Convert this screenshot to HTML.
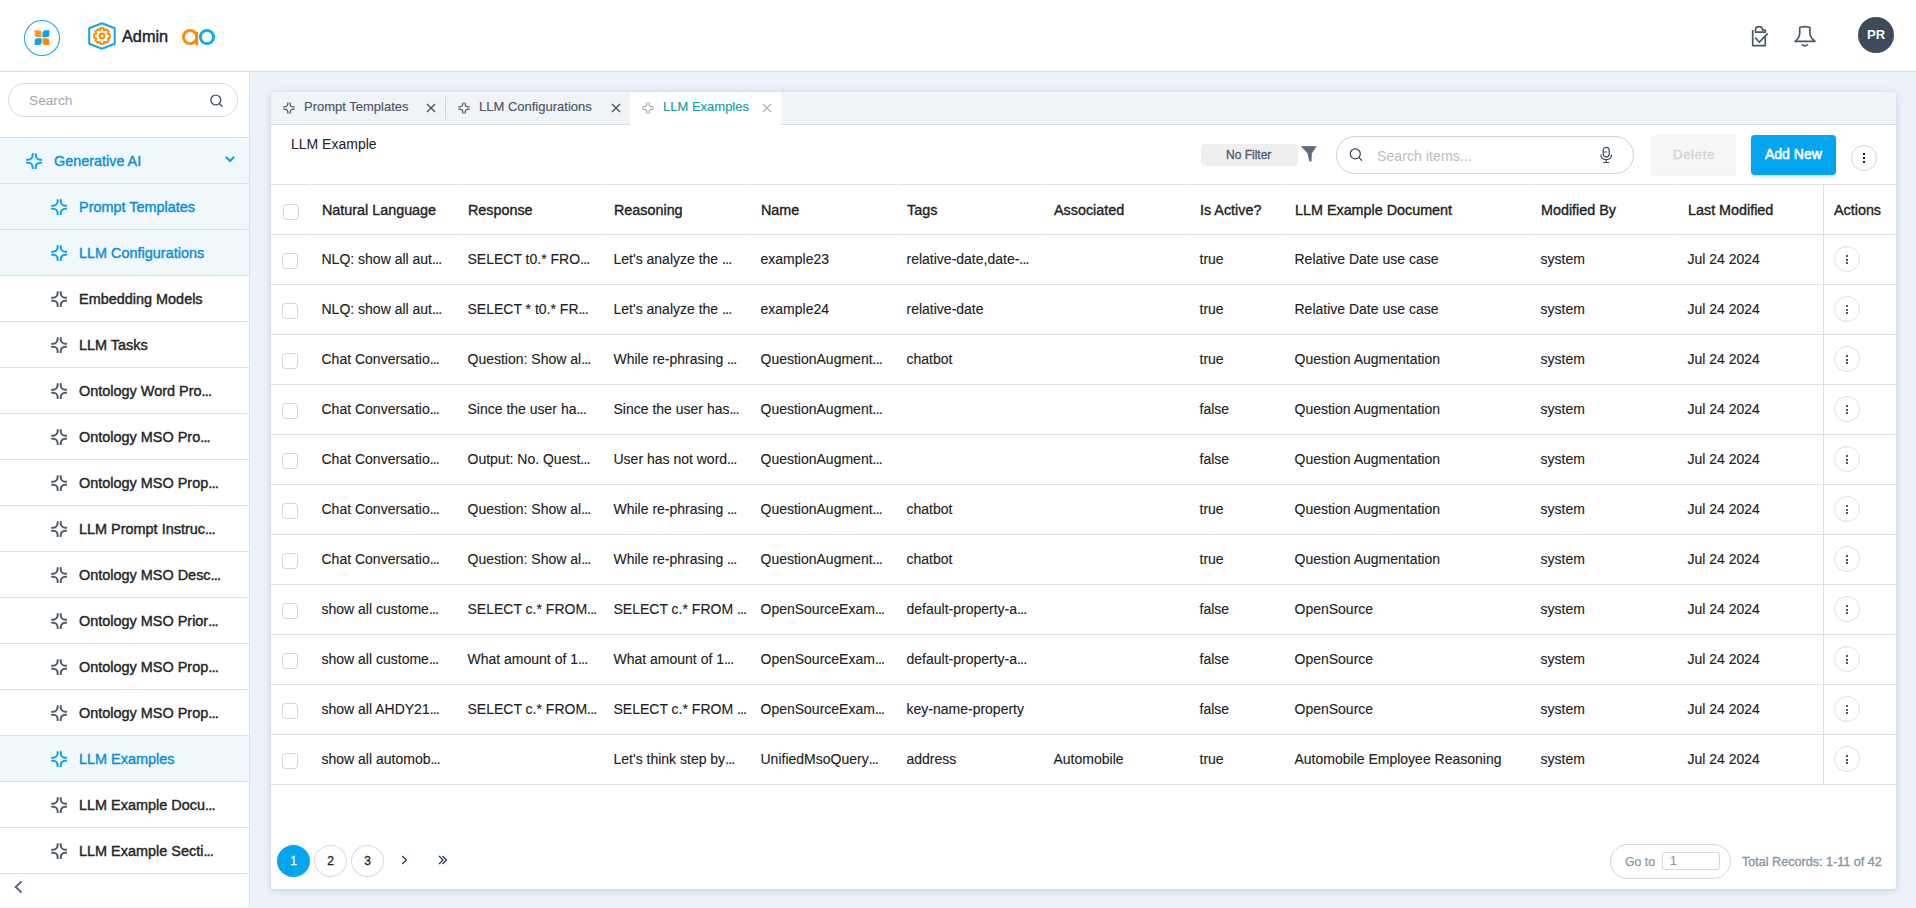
<!DOCTYPE html>
<html><head><meta charset="utf-8"><title>LLM Examples</title>
<style>
*{box-sizing:border-box;margin:0;padding:0}
html,body{width:1916px;height:908px;overflow:hidden}
body{font-family:"Liberation Sans", sans-serif;background:#EDF1F9;color:#212121;position:relative}
.a{position:absolute}
svg{display:block}
.t{position:absolute;line-height:20px;white-space:nowrap}
.ln{position:absolute;height:1px;background:#E0E0E0}
.cb{position:absolute;width:16px;height:16px;border:1px solid #D3D3D3;border-radius:3.5px;background:#fff}
.kb{position:absolute;width:26px;height:26px;border:1px solid #E0E0E0;border-radius:50%;background:#fff}
.kb i{position:absolute;left:11px;width:2px;height:2px;background:#555}
</style></head><body>

<div class="a" style="left:0;top:0;width:1916px;height:71px;background:#fff"></div>
<div class="ln" style="left:0;top:71px;width:1916px;background:#DCDCDC"></div>
<svg class="a" style="left:0;top:0" width="230" height="71" viewBox="0 0 230 71">
 <circle cx="42" cy="38" r="17.5" fill="#fff" stroke="#1AA8EC" stroke-width="1.1"/>
 <path d="M34.6 30.2 H38.6 Q41.6 30.2 41.6 33.2 V37.3 H37.6 Q34.6 37.3 34.6 34.3 Z" fill="#FF9A22"/>
 <path d="M42.5 33.2 Q42.5 30.2 45.5 30.2 H49.4 V34.3 Q49.4 37.3 46.4 37.3 H42.5 Z" fill="#07A5EE"/>
 <path d="M34.6 41.2 Q34.6 38.2 37.6 38.2 H41.6 V42 Q41.6 45 38.6 45 H34.6 Z" fill="#07A5EE"/>
 <path d="M42.5 38.2 H46.4 Q49.4 38.2 49.4 41.2 V45 H45.5 Q42.5 45 42.5 42 Z" fill="#FF8A00"/>
 <path d="M102 23.3 L114.7 28.3 V43.7 L102 48.7 L89.2 43.7 V28.3 Z" fill="none" stroke="#0BA8EA" stroke-width="2" stroke-linejoin="round"/>
 <g transform="translate(102 36)"><path d="M-2.10 -5.94 L-1.75 -7.81 L1.75 -7.81 L2.10 -5.94 L2.71 -5.69 L4.29 -6.76 L6.76 -4.29 L5.69 -2.71 L5.94 -2.10 L7.81 -1.75 L7.81 1.75 L5.94 2.10 L5.69 2.71 L6.76 4.29 L4.29 6.76 L2.71 5.69 L2.10 5.94 L1.75 7.81 L-1.75 7.81 L-2.10 5.94 L-2.71 5.69 L-4.29 6.76 L-6.76 4.29 L-5.69 2.71 L-5.94 2.10 L-7.81 1.75 L-7.81 -1.75 L-5.94 -2.10 L-5.69 -2.71 L-6.76 -4.29 L-4.29 -6.76 L-2.71 -5.69Z" fill="none" stroke="#FF8A00" stroke-width="1.9" stroke-linejoin="round"/><circle r="2.4" fill="none" stroke="#FF8A00" stroke-width="2"/></g>
 <circle cx="190" cy="37" r="6.6" fill="none" stroke="#FF8A00" stroke-width="2.9"/>
 <rect x="195.3" y="32" width="2.9" height="13" fill="#FF8A00"/>
 <circle cx="207" cy="37" r="6.6" fill="none" stroke="#0BAEEC" stroke-width="2.9"/>
</svg>
<div class="t" style="left:122px;top:26px;font-size:16.3px;color:#1C2330;-webkit-text-stroke:0.45px #1C2330;">Admin</div>
<svg class="a" style="left:1745px;top:20px" width="80" height="32" viewBox="0 0 80 32" fill="none" stroke="#4A5868" stroke-width="1.7">
 <path d="M7.7 10 V25.7 H20.3 V16.5"/>
 <path d="M10.5 12.2 V10 Q10.5 6.6 14 6.6 Q17.5 6.6 17.5 10 H20.3 V12.2 Z" stroke-linejoin="round"/>
 <path d="M10.2 17.5 L14.2 22.3 L22.8 13.4"/>
 <path d="M54.7 7.5 Q59.8 5.8 64.9 7.5 V13 Q64.9 16 67 18.5 L70 21.3 H50 L53 18.5 Q54.7 16 54.7 13 Z" stroke-linejoin="round"/>
 <path d="M56.8 24.3 Q59.8 27.3 62.8 24.3"/>
</svg>
<div class="a" style="left:1858px;top:17px;width:36px;height:36px;border-radius:50%;background:#3F4B5A"></div>
<div class="t" style="left:1858px;top:25px;width:36px;text-align:center;font-size:13px;font-weight:bold;color:#fff">PR</div>

<div class="a" style="left:0;top:72px;width:249px;height:835px;background:#fff"></div>
<div class="a" style="left:249px;top:72px;width:1px;height:835px;background:#E0E0E0"></div>
<div class="a" style="left:8px;top:83px;width:230px;height:34px;border:1px solid #D9D9D9;border-radius:17px;background:#fff"></div>
<div class="t" style="left:29px;top:91px;font-size:13.7px;color:#A4A8AD;">Search</div>
<svg class="a" style="left:209px;top:93px" width="16" height="16" viewBox="0 0 16 16" fill="none" stroke="#4A5868" stroke-width="1.4"><circle cx="6.8" cy="7" r="4.9"/><path d="M10.3 10.5 L13.6 13.8"/></svg>
<div class="a" style="left:0;top:138px;width:249px;height:137px;background:#F0F8FC"></div>
<div class="a" style="left:0;top:736px;width:249px;height:45px;background:#F0F8FC"></div>
<div class="ln" style="left:0;top:137px;width:249px"></div>
<div class="ln" style="left:0;top:183px;width:249px"></div>
<div class="ln" style="left:0;top:229px;width:249px"></div>
<div class="ln" style="left:0;top:275px;width:249px"></div>
<div class="ln" style="left:0;top:321px;width:249px"></div>
<div class="ln" style="left:0;top:367px;width:249px"></div>
<div class="ln" style="left:0;top:413px;width:249px"></div>
<div class="ln" style="left:0;top:459px;width:249px"></div>
<div class="ln" style="left:0;top:505px;width:249px"></div>
<div class="ln" style="left:0;top:551px;width:249px"></div>
<div class="ln" style="left:0;top:597px;width:249px"></div>
<div class="ln" style="left:0;top:643px;width:249px"></div>
<div class="ln" style="left:0;top:689px;width:249px"></div>
<div class="ln" style="left:0;top:735px;width:249px"></div>
<div class="ln" style="left:0;top:781px;width:249px"></div>
<div class="ln" style="left:0;top:827px;width:249px"></div>
<div class="ln" style="left:0;top:873px;width:249px"></div>
<div class="a" style="left:26px;top:153px"><svg width="16.4" height="16.4" viewBox="0 0 16 16" fill="none" stroke="#0AA3EC" stroke-width="1.95" stroke-linecap="round"><path d="M6.5 1V2.2A4.3 4.3 0 0 1 2.2 6.5H1M9.5 1V2.2A4.3 4.3 0 0 0 13.8 6.5H15M1 9.5H2.2A4.3 4.3 0 0 1 6.5 13.8V15M15 9.5H13.8A4.3 4.3 0 0 0 9.5 13.8V15"/></svg></div>
<div class="t" style="left:54px;top:151px;font-size:14.4px;color:#0C90D2;-webkit-text-stroke:0.4px #0C90D2;">Generative AI</div>
<svg class="a" style="left:224px;top:155px" width="12" height="9" viewBox="0 0 12 9" fill="none" stroke="#0AA3EC" stroke-width="2"><path d="M1.8 1.8 L6 6 L10.2 1.8"/></svg>
<div class="a" style="left:51px;top:199px"><svg width="16.4" height="16.4" viewBox="0 0 16 16" fill="none" stroke="#0AA3EC" stroke-width="1.95" stroke-linecap="round"><path d="M6.5 1V2.2A4.3 4.3 0 0 1 2.2 6.5H1M9.5 1V2.2A4.3 4.3 0 0 0 13.8 6.5H15M1 9.5H2.2A4.3 4.3 0 0 1 6.5 13.8V15M15 9.5H13.8A4.3 4.3 0 0 0 9.5 13.8V15"/></svg></div>
<div class="t" style="left:79px;top:197px;font-size:14.45px;color:#0C90D2;-webkit-text-stroke:0.42px #0C90D2;">Prompt Templates</div>
<div class="a" style="left:51px;top:245px"><svg width="16.4" height="16.4" viewBox="0 0 16 16" fill="none" stroke="#0AA3EC" stroke-width="1.95" stroke-linecap="round"><path d="M6.5 1V2.2A4.3 4.3 0 0 1 2.2 6.5H1M9.5 1V2.2A4.3 4.3 0 0 0 13.8 6.5H15M1 9.5H2.2A4.3 4.3 0 0 1 6.5 13.8V15M15 9.5H13.8A4.3 4.3 0 0 0 9.5 13.8V15"/></svg></div>
<div class="t" style="left:79px;top:243px;font-size:14.45px;color:#0C90D2;-webkit-text-stroke:0.42px #0C90D2;">LLM Configurations</div>
<div class="a" style="left:51px;top:291px"><svg width="16.4" height="16.4" viewBox="0 0 16 16" fill="none" stroke="#4E5C6C" stroke-width="1.95" stroke-linecap="round"><path d="M6.5 1V2.2A4.3 4.3 0 0 1 2.2 6.5H1M9.5 1V2.2A4.3 4.3 0 0 0 13.8 6.5H15M1 9.5H2.2A4.3 4.3 0 0 1 6.5 13.8V15M15 9.5H13.8A4.3 4.3 0 0 0 9.5 13.8V15"/></svg></div>
<div class="t" style="left:79px;top:289px;font-size:14.45px;color:#262626;-webkit-text-stroke:0.42px #262626;">Embedding Models</div>
<div class="a" style="left:51px;top:337px"><svg width="16.4" height="16.4" viewBox="0 0 16 16" fill="none" stroke="#4E5C6C" stroke-width="1.95" stroke-linecap="round"><path d="M6.5 1V2.2A4.3 4.3 0 0 1 2.2 6.5H1M9.5 1V2.2A4.3 4.3 0 0 0 13.8 6.5H15M1 9.5H2.2A4.3 4.3 0 0 1 6.5 13.8V15M15 9.5H13.8A4.3 4.3 0 0 0 9.5 13.8V15"/></svg></div>
<div class="t" style="left:79px;top:335px;font-size:14.45px;color:#262626;-webkit-text-stroke:0.42px #262626;">LLM Tasks</div>
<div class="a" style="left:51px;top:383px"><svg width="16.4" height="16.4" viewBox="0 0 16 16" fill="none" stroke="#4E5C6C" stroke-width="1.95" stroke-linecap="round"><path d="M6.5 1V2.2A4.3 4.3 0 0 1 2.2 6.5H1M9.5 1V2.2A4.3 4.3 0 0 0 13.8 6.5H15M1 9.5H2.2A4.3 4.3 0 0 1 6.5 13.8V15M15 9.5H13.8A4.3 4.3 0 0 0 9.5 13.8V15"/></svg></div>
<div class="t" style="left:79px;top:381px;font-size:14.45px;color:#262626;-webkit-text-stroke:0.42px #262626;">Ontology Word Pro<span style="letter-spacing:-0.8px">...</span></div>
<div class="a" style="left:51px;top:429px"><svg width="16.4" height="16.4" viewBox="0 0 16 16" fill="none" stroke="#4E5C6C" stroke-width="1.95" stroke-linecap="round"><path d="M6.5 1V2.2A4.3 4.3 0 0 1 2.2 6.5H1M9.5 1V2.2A4.3 4.3 0 0 0 13.8 6.5H15M1 9.5H2.2A4.3 4.3 0 0 1 6.5 13.8V15M15 9.5H13.8A4.3 4.3 0 0 0 9.5 13.8V15"/></svg></div>
<div class="t" style="left:79px;top:427px;font-size:14.45px;color:#262626;-webkit-text-stroke:0.42px #262626;">Ontology MSO Pro<span style="letter-spacing:-0.8px">...</span></div>
<div class="a" style="left:51px;top:475px"><svg width="16.4" height="16.4" viewBox="0 0 16 16" fill="none" stroke="#4E5C6C" stroke-width="1.95" stroke-linecap="round"><path d="M6.5 1V2.2A4.3 4.3 0 0 1 2.2 6.5H1M9.5 1V2.2A4.3 4.3 0 0 0 13.8 6.5H15M1 9.5H2.2A4.3 4.3 0 0 1 6.5 13.8V15M15 9.5H13.8A4.3 4.3 0 0 0 9.5 13.8V15"/></svg></div>
<div class="t" style="left:79px;top:473px;font-size:14.45px;color:#262626;-webkit-text-stroke:0.42px #262626;">Ontology MSO Prop<span style="letter-spacing:-0.8px">...</span></div>
<div class="a" style="left:51px;top:521px"><svg width="16.4" height="16.4" viewBox="0 0 16 16" fill="none" stroke="#4E5C6C" stroke-width="1.95" stroke-linecap="round"><path d="M6.5 1V2.2A4.3 4.3 0 0 1 2.2 6.5H1M9.5 1V2.2A4.3 4.3 0 0 0 13.8 6.5H15M1 9.5H2.2A4.3 4.3 0 0 1 6.5 13.8V15M15 9.5H13.8A4.3 4.3 0 0 0 9.5 13.8V15"/></svg></div>
<div class="t" style="left:79px;top:519px;font-size:14.45px;color:#262626;-webkit-text-stroke:0.42px #262626;">LLM Prompt Instruc<span style="letter-spacing:-0.8px">...</span></div>
<div class="a" style="left:51px;top:567px"><svg width="16.4" height="16.4" viewBox="0 0 16 16" fill="none" stroke="#4E5C6C" stroke-width="1.95" stroke-linecap="round"><path d="M6.5 1V2.2A4.3 4.3 0 0 1 2.2 6.5H1M9.5 1V2.2A4.3 4.3 0 0 0 13.8 6.5H15M1 9.5H2.2A4.3 4.3 0 0 1 6.5 13.8V15M15 9.5H13.8A4.3 4.3 0 0 0 9.5 13.8V15"/></svg></div>
<div class="t" style="left:79px;top:565px;font-size:14.45px;color:#262626;-webkit-text-stroke:0.42px #262626;">Ontology MSO Desc<span style="letter-spacing:-0.8px">...</span></div>
<div class="a" style="left:51px;top:613px"><svg width="16.4" height="16.4" viewBox="0 0 16 16" fill="none" stroke="#4E5C6C" stroke-width="1.95" stroke-linecap="round"><path d="M6.5 1V2.2A4.3 4.3 0 0 1 2.2 6.5H1M9.5 1V2.2A4.3 4.3 0 0 0 13.8 6.5H15M1 9.5H2.2A4.3 4.3 0 0 1 6.5 13.8V15M15 9.5H13.8A4.3 4.3 0 0 0 9.5 13.8V15"/></svg></div>
<div class="t" style="left:79px;top:611px;font-size:14.45px;color:#262626;-webkit-text-stroke:0.42px #262626;">Ontology MSO Prior<span style="letter-spacing:-0.8px">...</span></div>
<div class="a" style="left:51px;top:659px"><svg width="16.4" height="16.4" viewBox="0 0 16 16" fill="none" stroke="#4E5C6C" stroke-width="1.95" stroke-linecap="round"><path d="M6.5 1V2.2A4.3 4.3 0 0 1 2.2 6.5H1M9.5 1V2.2A4.3 4.3 0 0 0 13.8 6.5H15M1 9.5H2.2A4.3 4.3 0 0 1 6.5 13.8V15M15 9.5H13.8A4.3 4.3 0 0 0 9.5 13.8V15"/></svg></div>
<div class="t" style="left:79px;top:657px;font-size:14.45px;color:#262626;-webkit-text-stroke:0.42px #262626;">Ontology MSO Prop<span style="letter-spacing:-0.8px">...</span></div>
<div class="a" style="left:51px;top:705px"><svg width="16.4" height="16.4" viewBox="0 0 16 16" fill="none" stroke="#4E5C6C" stroke-width="1.95" stroke-linecap="round"><path d="M6.5 1V2.2A4.3 4.3 0 0 1 2.2 6.5H1M9.5 1V2.2A4.3 4.3 0 0 0 13.8 6.5H15M1 9.5H2.2A4.3 4.3 0 0 1 6.5 13.8V15M15 9.5H13.8A4.3 4.3 0 0 0 9.5 13.8V15"/></svg></div>
<div class="t" style="left:79px;top:703px;font-size:14.45px;color:#262626;-webkit-text-stroke:0.42px #262626;">Ontology MSO Prop<span style="letter-spacing:-0.8px">...</span></div>
<div class="a" style="left:51px;top:751px"><svg width="16.4" height="16.4" viewBox="0 0 16 16" fill="none" stroke="#0AA3EC" stroke-width="1.95" stroke-linecap="round"><path d="M6.5 1V2.2A4.3 4.3 0 0 1 2.2 6.5H1M9.5 1V2.2A4.3 4.3 0 0 0 13.8 6.5H15M1 9.5H2.2A4.3 4.3 0 0 1 6.5 13.8V15M15 9.5H13.8A4.3 4.3 0 0 0 9.5 13.8V15"/></svg></div>
<div class="t" style="left:79px;top:749px;font-size:14.45px;color:#0C90D2;-webkit-text-stroke:0.42px #0C90D2;">LLM Examples</div>
<div class="a" style="left:51px;top:797px"><svg width="16.4" height="16.4" viewBox="0 0 16 16" fill="none" stroke="#4E5C6C" stroke-width="1.95" stroke-linecap="round"><path d="M6.5 1V2.2A4.3 4.3 0 0 1 2.2 6.5H1M9.5 1V2.2A4.3 4.3 0 0 0 13.8 6.5H15M1 9.5H2.2A4.3 4.3 0 0 1 6.5 13.8V15M15 9.5H13.8A4.3 4.3 0 0 0 9.5 13.8V15"/></svg></div>
<div class="t" style="left:79px;top:795px;font-size:14.45px;color:#262626;-webkit-text-stroke:0.42px #262626;">LLM Example Docu<span style="letter-spacing:-0.8px">...</span></div>
<div class="a" style="left:51px;top:843px"><svg width="16.4" height="16.4" viewBox="0 0 16 16" fill="none" stroke="#4E5C6C" stroke-width="1.95" stroke-linecap="round"><path d="M6.5 1V2.2A4.3 4.3 0 0 1 2.2 6.5H1M9.5 1V2.2A4.3 4.3 0 0 0 13.8 6.5H15M1 9.5H2.2A4.3 4.3 0 0 1 6.5 13.8V15M15 9.5H13.8A4.3 4.3 0 0 0 9.5 13.8V15"/></svg></div>
<div class="t" style="left:79px;top:841px;font-size:14.45px;color:#262626;-webkit-text-stroke:0.42px #262626;">LLM Example Secti<span style="letter-spacing:-0.8px">...</span></div>
<svg class="a" style="left:13px;top:880px" width="11" height="14" viewBox="0 0 11 14" fill="none" stroke="#556575" stroke-width="1.8"><path d="M8.5 1.5 L2.6 7 L8.5 12.5"/></svg>
<div class="a" style="left:271px;top:92px;width:1625px;height:797px;background:#fff;border-radius:3px;box-shadow:0 0 1px rgba(40,50,70,0.18),0 2px 6px rgba(50,60,90,0.12),0 0 12px rgba(50,60,90,0.06)"></div>
<div class="a" style="left:271px;top:92px;width:1625px;height:32px;background:#F1F4F7;border-radius:4px 4px 0 0"></div>
<div class="ln" style="left:271px;top:124px;width:1625px;background:#D9D9D9"></div>
<div class="a" style="left:630px;top:92px;width:151px;height:33px;background:#fff"></div>
<div class="a" style="left:445px;top:97px;width:1px;height:22px;background:#CFD3D8"></div>
<div class="a" style="left:283px;top:102px"><svg width="12" height="12" viewBox="0 0 16 16" fill="none" stroke="#505A68" stroke-width="1.65" stroke-linecap="round"><path d="M6.5 1V2.2A4.3 4.3 0 0 1 2.2 6.5H1M9.5 1V2.2A4.3 4.3 0 0 0 13.8 6.5H15M1 9.5H2.2A4.3 4.3 0 0 1 6.5 13.8V15M15 9.5H13.8A4.3 4.3 0 0 0 9.5 13.8V15"/></svg></div>
<div class="t" style="left:304px;top:97px;font-size:13px;color:#4A5463;-webkit-text-stroke:0.15px #4A5463;">Prompt Templates</div>
<svg class="a" style="left:426px;top:103px" width="10" height="10" viewBox="0 0 10 10" stroke="#4A5463" stroke-width="1.4"><path d="M1 1L9 9M9 1L1 9"/></svg>
<div class="a" style="left:458px;top:102px"><svg width="12" height="12" viewBox="0 0 16 16" fill="none" stroke="#505A68" stroke-width="1.65" stroke-linecap="round"><path d="M6.5 1V2.2A4.3 4.3 0 0 1 2.2 6.5H1M9.5 1V2.2A4.3 4.3 0 0 0 13.8 6.5H15M1 9.5H2.2A4.3 4.3 0 0 1 6.5 13.8V15M15 9.5H13.8A4.3 4.3 0 0 0 9.5 13.8V15"/></svg></div>
<div class="t" style="left:479px;top:97px;font-size:13px;color:#4A5463;-webkit-text-stroke:0.15px #4A5463;">LLM Configurations</div>
<svg class="a" style="left:611px;top:103px" width="10" height="10" viewBox="0 0 10 10" stroke="#4A5463" stroke-width="1.4"><path d="M1 1L9 9M9 1L1 9"/></svg>
<div class="a" style="left:642px;top:102px"><svg width="12" height="12" viewBox="0 0 16 16" fill="none" stroke="#ABABAB" stroke-width="1.65" stroke-linecap="round"><path d="M6.5 1V2.2A4.3 4.3 0 0 1 2.2 6.5H1M9.5 1V2.2A4.3 4.3 0 0 0 13.8 6.5H15M1 9.5H2.2A4.3 4.3 0 0 1 6.5 13.8V15M15 9.5H13.8A4.3 4.3 0 0 0 9.5 13.8V15"/></svg></div>
<div class="t" style="left:663px;top:97px;font-size:13px;color:#0FA2A0;-webkit-text-stroke:0.15px #0FA2A0;">LLM Examples</div>
<svg class="a" style="left:762px;top:103px" width="10" height="10" viewBox="0 0 10 10" stroke="#B5B5B5" stroke-width="1.4"><path d="M1 1L9 9M9 1L1 9"/></svg>
<div class="t" style="left:291px;top:134px;font-size:14px;color:#212121;">LLM Example</div>
<div class="a" style="left:1201px;top:144px;width:97px;height:22px;background:#EFEFEF;border-radius:4px"></div>
<div class="t" style="left:1226px;top:145px;font-size:12px;color:#4A5A6A;-webkit-text-stroke:0.3px #4A5A6A;">No Filter</div>
<svg class="a" style="left:1301px;top:146px" width="16" height="16" viewBox="0 0 16 16"><path d="M0.2 0.3 H15.4 L10.6 7.4 L10.2 15.6 L8.4 14.8 L6.8 7.4 Z" fill="#5A6B7D" stroke="#5A6B7D" stroke-width="0.5" stroke-linejoin="round"/></svg>
<div class="a" style="left:1336px;top:136px;width:298px;height:38px;border:1px solid #D0D0D0;border-radius:19px;background:#fff"></div>
<svg class="a" style="left:1348px;top:147px" width="16" height="16" viewBox="0 0 16 16" fill="none" stroke="#3F4B5A" stroke-width="1.3"><circle cx="7.3" cy="6.8" r="5"/><path d="M10.8 10.4 L14 13.6"/></svg>
<div class="t" style="left:1377px;top:146px;font-size:14.2px;color:#BDBDBD;">Search items...</div>
<svg class="a" style="left:1598px;top:145px" width="16" height="19" viewBox="0 0 16 19" fill="none" stroke="#3F4B5A" stroke-width="1.2"><rect x="5.2" y="2.3" width="6" height="9.6" rx="3"/><path d="M2.9 9.5 Q2.9 14.6 8.2 14.6 Q13.5 14.6 13.5 9.5M8.2 14.6 V17.5M5.2 17.5 H11.2M5.5 7 H9"/></svg>
<div class="a" style="left:1651px;top:135px;width:85px;height:40px;background:#F6F6F6;border-radius:4px;box-shadow:0 1px 2px rgba(0,0,0,0.07)"></div>
<div class="t" style="left:1673px;top:145px;font-size:13px;color:#D2D2D2;letter-spacing:0.75px;-webkit-text-stroke:0.3px #D2D2D2;">Delete</div>
<div class="a" style="left:1751px;top:135px;width:85px;height:40px;background:#03A6EE;border-radius:4px;box-shadow:0 2px 3px rgba(0,0,0,0.14)"></div>
<div class="t" style="left:1765px;top:144px;font-size:14px;color:#fff;-webkit-text-stroke:0.55px #fff;">Add New</div>
<div class="a" style="left:1851px;top:145px;width:26px;height:26px;border:1px solid #D6D6D6;border-radius:50%;background:#fff"></div>
<div class="a" style="left:1863px;top:153px;width:2px;height:2px;background:#1C2330"></div>
<div class="a" style="left:1863px;top:157px;width:2px;height:2px;background:#1C2330"></div>
<div class="a" style="left:1863px;top:161px;width:2px;height:2px;background:#1C2330"></div>
<div class="ln" style="left:271px;top:184px;width:1625px"></div>
<div class="ln" style="left:271px;top:234px;width:1625px"></div>
<div class="ln" style="left:271px;top:284px;width:1625px"></div>
<div class="ln" style="left:271px;top:334px;width:1625px"></div>
<div class="ln" style="left:271px;top:384px;width:1625px"></div>
<div class="ln" style="left:271px;top:434px;width:1625px"></div>
<div class="ln" style="left:271px;top:484px;width:1625px"></div>
<div class="ln" style="left:271px;top:534px;width:1625px"></div>
<div class="ln" style="left:271px;top:584px;width:1625px"></div>
<div class="ln" style="left:271px;top:634px;width:1625px"></div>
<div class="ln" style="left:271px;top:684px;width:1625px"></div>
<div class="ln" style="left:271px;top:734px;width:1625px"></div>
<div class="ln" style="left:271px;top:784px;width:1625px"></div>
<div class="a" style="left:311px;top:184px;width:1px;height:1px;background:#fff"></div>
<div class="a" style="left:311px;top:234px;width:1px;height:1px;background:#fff"></div>
<div class="a" style="left:457px;top:184px;width:1px;height:1px;background:#fff"></div>
<div class="a" style="left:457px;top:234px;width:1px;height:1px;background:#fff"></div>
<div class="a" style="left:603px;top:184px;width:1px;height:1px;background:#fff"></div>
<div class="a" style="left:603px;top:234px;width:1px;height:1px;background:#fff"></div>
<div class="a" style="left:750px;top:184px;width:1px;height:1px;background:#fff"></div>
<div class="a" style="left:750px;top:234px;width:1px;height:1px;background:#fff"></div>
<div class="a" style="left:896px;top:184px;width:1px;height:1px;background:#fff"></div>
<div class="a" style="left:896px;top:234px;width:1px;height:1px;background:#fff"></div>
<div class="a" style="left:1043px;top:184px;width:1px;height:1px;background:#fff"></div>
<div class="a" style="left:1043px;top:234px;width:1px;height:1px;background:#fff"></div>
<div class="a" style="left:1189px;top:184px;width:1px;height:1px;background:#fff"></div>
<div class="a" style="left:1189px;top:234px;width:1px;height:1px;background:#fff"></div>
<div class="a" style="left:1284px;top:184px;width:1px;height:1px;background:#fff"></div>
<div class="a" style="left:1284px;top:234px;width:1px;height:1px;background:#fff"></div>
<div class="a" style="left:1530px;top:184px;width:1px;height:1px;background:#fff"></div>
<div class="a" style="left:1530px;top:234px;width:1px;height:1px;background:#fff"></div>
<div class="a" style="left:1677px;top:184px;width:1px;height:1px;background:#fff"></div>
<div class="a" style="left:1677px;top:234px;width:1px;height:1px;background:#fff"></div>
<div class="a" style="left:1823px;top:184px;width:1px;height:601px;background:#E0E0E0"></div>
<div class="cb" style="left:283px;top:204px"></div>
<div class="t" style="left:322px;top:200px;font-size:14.35px;color:#212121;-webkit-text-stroke:0.35px #212121;">Natural Language</div>
<div class="t" style="left:468px;top:200px;font-size:14.35px;color:#212121;-webkit-text-stroke:0.35px #212121;">Response</div>
<div class="t" style="left:614px;top:200px;font-size:14.35px;color:#212121;-webkit-text-stroke:0.35px #212121;">Reasoning</div>
<div class="t" style="left:761px;top:200px;font-size:14.35px;color:#212121;-webkit-text-stroke:0.35px #212121;">Name</div>
<div class="t" style="left:907px;top:200px;font-size:14.35px;color:#212121;-webkit-text-stroke:0.35px #212121;">Tags</div>
<div class="t" style="left:1054px;top:200px;font-size:14.35px;color:#212121;-webkit-text-stroke:0.35px #212121;">Associated</div>
<div class="t" style="left:1200px;top:200px;font-size:14.35px;color:#212121;-webkit-text-stroke:0.35px #212121;">Is Active?</div>
<div class="t" style="left:1295px;top:200px;font-size:14.35px;color:#212121;-webkit-text-stroke:0.35px #212121;">LLM Example Document</div>
<div class="t" style="left:1541px;top:200px;font-size:14.35px;color:#212121;-webkit-text-stroke:0.35px #212121;">Modified By</div>
<div class="t" style="left:1688px;top:200px;font-size:14.35px;color:#212121;-webkit-text-stroke:0.35px #212121;">Last Modified</div>
<div class="t" style="left:1834px;top:200px;font-size:14.35px;color:#212121;-webkit-text-stroke:0.35px #212121;">Actions</div>
<div class="cb" style="left:282px;top:253px"></div>
<div class="t" style="left:321.5px;top:249px;font-size:14px;color:#212121;-webkit-text-stroke:0.12px #212121;">NLQ: show all aut<span style="letter-spacing:-0.8px">...</span></div>
<div class="t" style="left:467.5px;top:249px;font-size:14px;color:#212121;-webkit-text-stroke:0.12px #212121;">SELECT t0.* FRO<span style="letter-spacing:-0.8px">...</span></div>
<div class="t" style="left:613.5px;top:249px;font-size:14px;color:#212121;-webkit-text-stroke:0.12px #212121;">Let's analyze the <span style="letter-spacing:-0.8px">...</span></div>
<div class="t" style="left:760.5px;top:249px;font-size:14px;color:#212121;-webkit-text-stroke:0.12px #212121;">example23</div>
<div class="t" style="left:906.5px;top:249px;font-size:14px;color:#212121;-webkit-text-stroke:0.12px #212121;">relative-date,date-<span style="letter-spacing:-0.8px">...</span></div>
<div class="t" style="left:1199.5px;top:249px;font-size:14px;color:#212121;-webkit-text-stroke:0.12px #212121;">true</div>
<div class="t" style="left:1294.5px;top:249px;font-size:14px;color:#212121;-webkit-text-stroke:0.12px #212121;">Relative Date use case</div>
<div class="t" style="left:1540.5px;top:249px;font-size:14px;color:#212121;-webkit-text-stroke:0.12px #212121;">system</div>
<div class="t" style="left:1687.5px;top:249px;font-size:14px;color:#212121;-webkit-text-stroke:0.12px #212121;">Jul 24 2024</div>
<div class="kb" style="left:1834px;top:246px"><i style="top:8px"></i><i style="top:11.5px"></i><i style="top:15px"></i></div>
<div class="cb" style="left:282px;top:303px"></div>
<div class="t" style="left:321.5px;top:299px;font-size:14px;color:#212121;-webkit-text-stroke:0.12px #212121;">NLQ: show all aut<span style="letter-spacing:-0.8px">...</span></div>
<div class="t" style="left:467.5px;top:299px;font-size:14px;color:#212121;-webkit-text-stroke:0.12px #212121;">SELECT * t0.* FR<span style="letter-spacing:-0.8px">...</span></div>
<div class="t" style="left:613.5px;top:299px;font-size:14px;color:#212121;-webkit-text-stroke:0.12px #212121;">Let's analyze the <span style="letter-spacing:-0.8px">...</span></div>
<div class="t" style="left:760.5px;top:299px;font-size:14px;color:#212121;-webkit-text-stroke:0.12px #212121;">example24</div>
<div class="t" style="left:906.5px;top:299px;font-size:14px;color:#212121;-webkit-text-stroke:0.12px #212121;">relative-date</div>
<div class="t" style="left:1199.5px;top:299px;font-size:14px;color:#212121;-webkit-text-stroke:0.12px #212121;">true</div>
<div class="t" style="left:1294.5px;top:299px;font-size:14px;color:#212121;-webkit-text-stroke:0.12px #212121;">Relative Date use case</div>
<div class="t" style="left:1540.5px;top:299px;font-size:14px;color:#212121;-webkit-text-stroke:0.12px #212121;">system</div>
<div class="t" style="left:1687.5px;top:299px;font-size:14px;color:#212121;-webkit-text-stroke:0.12px #212121;">Jul 24 2024</div>
<div class="kb" style="left:1834px;top:296px"><i style="top:8px"></i><i style="top:11.5px"></i><i style="top:15px"></i></div>
<div class="cb" style="left:282px;top:353px"></div>
<div class="t" style="left:321.5px;top:349px;font-size:14px;color:#212121;-webkit-text-stroke:0.12px #212121;">Chat Conversatio<span style="letter-spacing:-0.8px">...</span></div>
<div class="t" style="left:467.5px;top:349px;font-size:14px;color:#212121;-webkit-text-stroke:0.12px #212121;">Question: Show al<span style="letter-spacing:-0.8px">...</span></div>
<div class="t" style="left:613.5px;top:349px;font-size:14px;color:#212121;-webkit-text-stroke:0.12px #212121;">While re-phrasing <span style="letter-spacing:-0.8px">...</span></div>
<div class="t" style="left:760.5px;top:349px;font-size:14px;color:#212121;-webkit-text-stroke:0.12px #212121;">QuestionAugment<span style="letter-spacing:-0.8px">...</span></div>
<div class="t" style="left:906.5px;top:349px;font-size:14px;color:#212121;-webkit-text-stroke:0.12px #212121;">chatbot</div>
<div class="t" style="left:1199.5px;top:349px;font-size:14px;color:#212121;-webkit-text-stroke:0.12px #212121;">true</div>
<div class="t" style="left:1294.5px;top:349px;font-size:14px;color:#212121;-webkit-text-stroke:0.12px #212121;">Question Augmentation</div>
<div class="t" style="left:1540.5px;top:349px;font-size:14px;color:#212121;-webkit-text-stroke:0.12px #212121;">system</div>
<div class="t" style="left:1687.5px;top:349px;font-size:14px;color:#212121;-webkit-text-stroke:0.12px #212121;">Jul 24 2024</div>
<div class="kb" style="left:1834px;top:346px"><i style="top:8px"></i><i style="top:11.5px"></i><i style="top:15px"></i></div>
<div class="cb" style="left:282px;top:403px"></div>
<div class="t" style="left:321.5px;top:399px;font-size:14px;color:#212121;-webkit-text-stroke:0.12px #212121;">Chat Conversatio<span style="letter-spacing:-0.8px">...</span></div>
<div class="t" style="left:467.5px;top:399px;font-size:14px;color:#212121;-webkit-text-stroke:0.12px #212121;">Since the user ha<span style="letter-spacing:-0.8px">...</span></div>
<div class="t" style="left:613.5px;top:399px;font-size:14px;color:#212121;-webkit-text-stroke:0.12px #212121;">Since the user has<span style="letter-spacing:-0.8px">...</span></div>
<div class="t" style="left:760.5px;top:399px;font-size:14px;color:#212121;-webkit-text-stroke:0.12px #212121;">QuestionAugment<span style="letter-spacing:-0.8px">...</span></div>
<div class="t" style="left:1199.5px;top:399px;font-size:14px;color:#212121;-webkit-text-stroke:0.12px #212121;">false</div>
<div class="t" style="left:1294.5px;top:399px;font-size:14px;color:#212121;-webkit-text-stroke:0.12px #212121;">Question Augmentation</div>
<div class="t" style="left:1540.5px;top:399px;font-size:14px;color:#212121;-webkit-text-stroke:0.12px #212121;">system</div>
<div class="t" style="left:1687.5px;top:399px;font-size:14px;color:#212121;-webkit-text-stroke:0.12px #212121;">Jul 24 2024</div>
<div class="kb" style="left:1834px;top:396px"><i style="top:8px"></i><i style="top:11.5px"></i><i style="top:15px"></i></div>
<div class="cb" style="left:282px;top:453px"></div>
<div class="t" style="left:321.5px;top:449px;font-size:14px;color:#212121;-webkit-text-stroke:0.12px #212121;">Chat Conversatio<span style="letter-spacing:-0.8px">...</span></div>
<div class="t" style="left:467.5px;top:449px;font-size:14px;color:#212121;-webkit-text-stroke:0.12px #212121;">Output: No. Quest<span style="letter-spacing:-0.8px">...</span></div>
<div class="t" style="left:613.5px;top:449px;font-size:14px;color:#212121;-webkit-text-stroke:0.12px #212121;">User has not word<span style="letter-spacing:-0.8px">...</span></div>
<div class="t" style="left:760.5px;top:449px;font-size:14px;color:#212121;-webkit-text-stroke:0.12px #212121;">QuestionAugment<span style="letter-spacing:-0.8px">...</span></div>
<div class="t" style="left:1199.5px;top:449px;font-size:14px;color:#212121;-webkit-text-stroke:0.12px #212121;">false</div>
<div class="t" style="left:1294.5px;top:449px;font-size:14px;color:#212121;-webkit-text-stroke:0.12px #212121;">Question Augmentation</div>
<div class="t" style="left:1540.5px;top:449px;font-size:14px;color:#212121;-webkit-text-stroke:0.12px #212121;">system</div>
<div class="t" style="left:1687.5px;top:449px;font-size:14px;color:#212121;-webkit-text-stroke:0.12px #212121;">Jul 24 2024</div>
<div class="kb" style="left:1834px;top:446px"><i style="top:8px"></i><i style="top:11.5px"></i><i style="top:15px"></i></div>
<div class="cb" style="left:282px;top:503px"></div>
<div class="t" style="left:321.5px;top:499px;font-size:14px;color:#212121;-webkit-text-stroke:0.12px #212121;">Chat Conversatio<span style="letter-spacing:-0.8px">...</span></div>
<div class="t" style="left:467.5px;top:499px;font-size:14px;color:#212121;-webkit-text-stroke:0.12px #212121;">Question: Show al<span style="letter-spacing:-0.8px">...</span></div>
<div class="t" style="left:613.5px;top:499px;font-size:14px;color:#212121;-webkit-text-stroke:0.12px #212121;">While re-phrasing <span style="letter-spacing:-0.8px">...</span></div>
<div class="t" style="left:760.5px;top:499px;font-size:14px;color:#212121;-webkit-text-stroke:0.12px #212121;">QuestionAugment<span style="letter-spacing:-0.8px">...</span></div>
<div class="t" style="left:906.5px;top:499px;font-size:14px;color:#212121;-webkit-text-stroke:0.12px #212121;">chatbot</div>
<div class="t" style="left:1199.5px;top:499px;font-size:14px;color:#212121;-webkit-text-stroke:0.12px #212121;">true</div>
<div class="t" style="left:1294.5px;top:499px;font-size:14px;color:#212121;-webkit-text-stroke:0.12px #212121;">Question Augmentation</div>
<div class="t" style="left:1540.5px;top:499px;font-size:14px;color:#212121;-webkit-text-stroke:0.12px #212121;">system</div>
<div class="t" style="left:1687.5px;top:499px;font-size:14px;color:#212121;-webkit-text-stroke:0.12px #212121;">Jul 24 2024</div>
<div class="kb" style="left:1834px;top:496px"><i style="top:8px"></i><i style="top:11.5px"></i><i style="top:15px"></i></div>
<div class="cb" style="left:282px;top:553px"></div>
<div class="t" style="left:321.5px;top:549px;font-size:14px;color:#212121;-webkit-text-stroke:0.12px #212121;">Chat Conversatio<span style="letter-spacing:-0.8px">...</span></div>
<div class="t" style="left:467.5px;top:549px;font-size:14px;color:#212121;-webkit-text-stroke:0.12px #212121;">Question: Show al<span style="letter-spacing:-0.8px">...</span></div>
<div class="t" style="left:613.5px;top:549px;font-size:14px;color:#212121;-webkit-text-stroke:0.12px #212121;">While re-phrasing <span style="letter-spacing:-0.8px">...</span></div>
<div class="t" style="left:760.5px;top:549px;font-size:14px;color:#212121;-webkit-text-stroke:0.12px #212121;">QuestionAugment<span style="letter-spacing:-0.8px">...</span></div>
<div class="t" style="left:906.5px;top:549px;font-size:14px;color:#212121;-webkit-text-stroke:0.12px #212121;">chatbot</div>
<div class="t" style="left:1199.5px;top:549px;font-size:14px;color:#212121;-webkit-text-stroke:0.12px #212121;">true</div>
<div class="t" style="left:1294.5px;top:549px;font-size:14px;color:#212121;-webkit-text-stroke:0.12px #212121;">Question Augmentation</div>
<div class="t" style="left:1540.5px;top:549px;font-size:14px;color:#212121;-webkit-text-stroke:0.12px #212121;">system</div>
<div class="t" style="left:1687.5px;top:549px;font-size:14px;color:#212121;-webkit-text-stroke:0.12px #212121;">Jul 24 2024</div>
<div class="kb" style="left:1834px;top:546px"><i style="top:8px"></i><i style="top:11.5px"></i><i style="top:15px"></i></div>
<div class="cb" style="left:282px;top:603px"></div>
<div class="t" style="left:321.5px;top:599px;font-size:14px;color:#212121;-webkit-text-stroke:0.12px #212121;">show all custome<span style="letter-spacing:-0.8px">...</span></div>
<div class="t" style="left:467.5px;top:599px;font-size:14px;color:#212121;-webkit-text-stroke:0.12px #212121;">SELECT c.* FROM<span style="letter-spacing:-0.8px">...</span></div>
<div class="t" style="left:613.5px;top:599px;font-size:14px;color:#212121;-webkit-text-stroke:0.12px #212121;">SELECT c.* FROM <span style="letter-spacing:-0.8px">...</span></div>
<div class="t" style="left:760.5px;top:599px;font-size:14px;color:#212121;-webkit-text-stroke:0.12px #212121;">OpenSourceExam<span style="letter-spacing:-0.8px">...</span></div>
<div class="t" style="left:906.5px;top:599px;font-size:14px;color:#212121;-webkit-text-stroke:0.12px #212121;">default-property-a<span style="letter-spacing:-0.8px">...</span></div>
<div class="t" style="left:1199.5px;top:599px;font-size:14px;color:#212121;-webkit-text-stroke:0.12px #212121;">false</div>
<div class="t" style="left:1294.5px;top:599px;font-size:14px;color:#212121;-webkit-text-stroke:0.12px #212121;">OpenSource</div>
<div class="t" style="left:1540.5px;top:599px;font-size:14px;color:#212121;-webkit-text-stroke:0.12px #212121;">system</div>
<div class="t" style="left:1687.5px;top:599px;font-size:14px;color:#212121;-webkit-text-stroke:0.12px #212121;">Jul 24 2024</div>
<div class="kb" style="left:1834px;top:596px"><i style="top:8px"></i><i style="top:11.5px"></i><i style="top:15px"></i></div>
<div class="cb" style="left:282px;top:653px"></div>
<div class="t" style="left:321.5px;top:649px;font-size:14px;color:#212121;-webkit-text-stroke:0.12px #212121;">show all custome<span style="letter-spacing:-0.8px">...</span></div>
<div class="t" style="left:467.5px;top:649px;font-size:14px;color:#212121;-webkit-text-stroke:0.12px #212121;">What amount of 1<span style="letter-spacing:-0.8px">...</span></div>
<div class="t" style="left:613.5px;top:649px;font-size:14px;color:#212121;-webkit-text-stroke:0.12px #212121;">What amount of 1<span style="letter-spacing:-0.8px">...</span></div>
<div class="t" style="left:760.5px;top:649px;font-size:14px;color:#212121;-webkit-text-stroke:0.12px #212121;">OpenSourceExam<span style="letter-spacing:-0.8px">...</span></div>
<div class="t" style="left:906.5px;top:649px;font-size:14px;color:#212121;-webkit-text-stroke:0.12px #212121;">default-property-a<span style="letter-spacing:-0.8px">...</span></div>
<div class="t" style="left:1199.5px;top:649px;font-size:14px;color:#212121;-webkit-text-stroke:0.12px #212121;">false</div>
<div class="t" style="left:1294.5px;top:649px;font-size:14px;color:#212121;-webkit-text-stroke:0.12px #212121;">OpenSource</div>
<div class="t" style="left:1540.5px;top:649px;font-size:14px;color:#212121;-webkit-text-stroke:0.12px #212121;">system</div>
<div class="t" style="left:1687.5px;top:649px;font-size:14px;color:#212121;-webkit-text-stroke:0.12px #212121;">Jul 24 2024</div>
<div class="kb" style="left:1834px;top:646px"><i style="top:8px"></i><i style="top:11.5px"></i><i style="top:15px"></i></div>
<div class="cb" style="left:282px;top:703px"></div>
<div class="t" style="left:321.5px;top:699px;font-size:14px;color:#212121;-webkit-text-stroke:0.12px #212121;">show all AHDY21<span style="letter-spacing:-0.8px">...</span></div>
<div class="t" style="left:467.5px;top:699px;font-size:14px;color:#212121;-webkit-text-stroke:0.12px #212121;">SELECT c.* FROM<span style="letter-spacing:-0.8px">...</span></div>
<div class="t" style="left:613.5px;top:699px;font-size:14px;color:#212121;-webkit-text-stroke:0.12px #212121;">SELECT c.* FROM <span style="letter-spacing:-0.8px">...</span></div>
<div class="t" style="left:760.5px;top:699px;font-size:14px;color:#212121;-webkit-text-stroke:0.12px #212121;">OpenSourceExam<span style="letter-spacing:-0.8px">...</span></div>
<div class="t" style="left:906.5px;top:699px;font-size:14px;color:#212121;-webkit-text-stroke:0.12px #212121;">key-name-property</div>
<div class="t" style="left:1199.5px;top:699px;font-size:14px;color:#212121;-webkit-text-stroke:0.12px #212121;">false</div>
<div class="t" style="left:1294.5px;top:699px;font-size:14px;color:#212121;-webkit-text-stroke:0.12px #212121;">OpenSource</div>
<div class="t" style="left:1540.5px;top:699px;font-size:14px;color:#212121;-webkit-text-stroke:0.12px #212121;">system</div>
<div class="t" style="left:1687.5px;top:699px;font-size:14px;color:#212121;-webkit-text-stroke:0.12px #212121;">Jul 24 2024</div>
<div class="kb" style="left:1834px;top:696px"><i style="top:8px"></i><i style="top:11.5px"></i><i style="top:15px"></i></div>
<div class="cb" style="left:282px;top:753px"></div>
<div class="t" style="left:321.5px;top:749px;font-size:14px;color:#212121;-webkit-text-stroke:0.12px #212121;">show all automob<span style="letter-spacing:-0.8px">...</span></div>
<div class="t" style="left:613.5px;top:749px;font-size:14px;color:#212121;-webkit-text-stroke:0.12px #212121;">Let's think step by<span style="letter-spacing:-0.8px">...</span></div>
<div class="t" style="left:760.5px;top:749px;font-size:14px;color:#212121;-webkit-text-stroke:0.12px #212121;">UnifiedMsoQuery<span style="letter-spacing:-0.8px">...</span></div>
<div class="t" style="left:906.5px;top:749px;font-size:14px;color:#212121;-webkit-text-stroke:0.12px #212121;">address</div>
<div class="t" style="left:1053.5px;top:749px;font-size:14px;color:#212121;-webkit-text-stroke:0.12px #212121;">Automobile</div>
<div class="t" style="left:1199.5px;top:749px;font-size:14px;color:#212121;-webkit-text-stroke:0.12px #212121;">true</div>
<div class="t" style="left:1294.5px;top:749px;font-size:14px;color:#212121;-webkit-text-stroke:0.12px #212121;">Automobile Employee Reasoning</div>
<div class="t" style="left:1540.5px;top:749px;font-size:14px;color:#212121;-webkit-text-stroke:0.12px #212121;">system</div>
<div class="t" style="left:1687.5px;top:749px;font-size:14px;color:#212121;-webkit-text-stroke:0.12px #212121;">Jul 24 2024</div>
<div class="kb" style="left:1834px;top:746px"><i style="top:8px"></i><i style="top:11.5px"></i><i style="top:15px"></i></div>
<div class="a" style="left:277px;top:845px;width:33px;height:32px;border-radius:50%;background:#03A6EE"></div>
<div class="a" style="left:314px;top:845px;width:33px;height:32px;border-radius:50%;border:1px solid #DADADA"></div>
<div class="a" style="left:351px;top:845px;width:33px;height:32px;border-radius:50%;border:1px solid #DADADA"></div>
<div class="t" style="left:277px;top:851px;width:33px;text-align:center;font-size:12px;color:#fff;-webkit-text-stroke:0.3px #fff">1</div>
<div class="t" style="left:314px;top:851px;width:33px;text-align:center;font-size:12px;color:#212121;-webkit-text-stroke:0.3px #212121">2</div>
<div class="t" style="left:351px;top:851px;width:33px;text-align:center;font-size:12px;color:#212121;-webkit-text-stroke:0.3px #212121">3</div>
<svg class="a" style="left:400px;top:854px" width="10" height="12" viewBox="0 0 10 12" fill="none" stroke="#2A3A5A" stroke-width="1.3"><path d="M2.2 2 L6.4 6 L2.2 10"/></svg>
<svg class="a" style="left:437px;top:854px" width="12" height="12" viewBox="0 0 12 12" fill="none" stroke="#2A3A5A" stroke-width="1.3"><path d="M2 2 L6 6 L2 10M5.5 2 L9.5 6 L5.5 10"/></svg>
<div class="a" style="left:1610px;top:844px;width:121px;height:35px;border:1px solid #D6D6D6;border-radius:18px"></div>
<div class="t" style="left:1625px;top:852px;font-size:12.3px;color:#8796A6;-webkit-text-stroke:0.2px #8796A6;">Go to</div>
<div class="a" style="left:1662px;top:852px;width:58px;height:18px;border:1px solid #D6D6D6;border-radius:3px"></div>
<div class="t" style="left:1670px;top:851px;font-size:12px;color:#8796A6;-webkit-text-stroke:0.2px #8796A6;">1</div>
<div class="t" style="left:1742px;top:852px;font-size:12.6px;color:#8796A6;-webkit-text-stroke:0.35px #8796A6;">Total Records: 1-11 of 42</div>
</body></html>
